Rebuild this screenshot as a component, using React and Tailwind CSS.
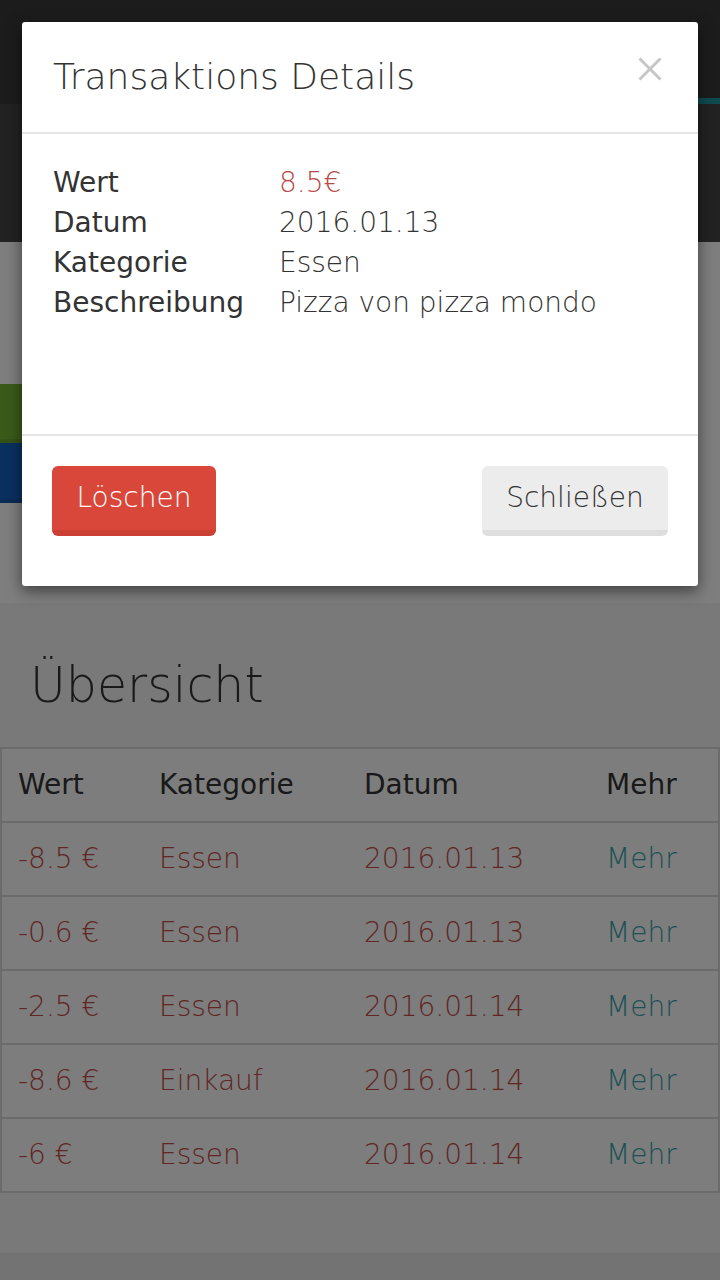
import React from "react";

const rows = [
  { wert: "-8.5 €", kategorie: "Essen", datum: "2016.01.13" },
  { wert: "-0.6 €", kategorie: "Essen", datum: "2016.01.13" },
  { wert: "-2.5 €", kategorie: "Essen", datum: "2016.01.14" },
  { wert: "-8.6 €", kategorie: "Einkauf", datum: "2016.01.14" },
  { wert: "-6 €", kategorie: "Essen", datum: "2016.01.14" },
];

const details = [
  { label: "Wert", value: "8.5€", red: true },
  { label: "Datum", value: "2016.01.13" },
  { label: "Kategorie", value: "Essen" },
  { label: "Beschreibung", value: "Pizza von pizza mondo" },
];

function Page() {
  return (
    <div className="flex flex-col">
      {/* Navbar */}
      <div className="h-[98px] bg-[#383838]" />
      <div className="flex h-[6px] bg-[#383838]">
        <div className="flex-1" />
        <div className="w-[22px] bg-[#1e949e]" />
      </div>
      <div className="h-[138px] bg-[#444444]" />

      {/* Top section */}
      <div className="flex flex-col bg-[#fcfcfc]">
        <div className="h-[142px]" />
        <div className="h-[59px] w-[40px] border-b-4 border-[#68a22c] bg-[#74b434]" />
        <div className="h-[60px] w-[40px] border-b-4 border-[#1256ad] bg-[#1460c0]" />
        <div className="h-[100px]" />
      </div>

      {/* Übersicht */}
      <div className="bg-[#f2f2f2] pb-[60px]">
        <h1 className="px-[30px] pt-[53px] pb-[31px] text-[49px] leading-[60px] font-extralight text-[#333]">
          Übersicht
        </h1>
        <table className="w-full table-fixed border-collapse border-2 border-[#d6d6d6] bg-[#fafafa] text-[28px]">
          <thead>
            <tr className="h-[74px] border-2 border-[#d6d6d6] text-left text-[#333]">
              <th className="w-[158px] pl-[16px] font-normal">Wert</th>
              <th className="w-[205px] font-normal">Kategorie</th>
              <th className="w-[242px] font-normal">Datum</th>
              <th className="font-normal">Mehr</th>
            </tr>
          </thead>
          <tbody className="font-extralight">
            {rows.map((r, i) => (
              <tr key={i} className="h-[74px] border-2 border-[#d6d6d6]">
                <td className="pl-[16px] text-[#bf4d49]">{r.wert}</td>
                <td className="text-[#bf4d49]">{r.kategorie}</td>
                <td className="text-[#bf4d49]">{r.datum}</td>
                <td className="text-[#36a2a8]">Mehr</td>
              </tr>
            ))}
          </tbody>
        </table>
      </div>
      <div className="h-[27px] bg-[#e6e6e6]" />
    </div>
  );
}

export default function App() {
  return (
    <div
      className="relative h-[1280px] w-[720px] overflow-hidden"
      style={{ fontFamily: '"DejaVu Sans", sans-serif' }}
    >
      <Page />
      {/* Backdrop */}
      <div className="absolute inset-0 bg-black/50" />

      {/* Modal */}
      <div className="absolute top-[22px] left-[22px] w-[676px] rounded-[3px] bg-white shadow-[0_5px_15px_rgba(0,0,0,0.5)]">
        <div className="flex h-[112px] items-start justify-between border-b-2 border-[#e5e5e5] pr-[36px] pl-[31px]">
          <h2 className="pt-[32px] text-[36px] leading-[46px] font-extralight text-[#333]">
            Transaktions Details
          </h2>
          <button className="mt-[35px] text-[#c6c6c6]">
            <svg width="24" height="24" viewBox="0 0 24 24">
              <path d="M1.5 1.5 L22.5 22.5 M22.5 1.5 L1.5 22.5" stroke="currentColor" strokeWidth="3" />
            </svg>
          </button>
        </div>

        <div className="h-[302px] border-b-2 border-[#e5e5e5] pt-[29px] pl-[31px] text-[28px] leading-[40px]">
          {details.map((d) => (
            <div key={d.label} className="flex">
              <div className="w-[226px] text-[#333]">{d.label}</div>
              <div className={d.red ? "font-extralight text-[#b94a48]" : "font-extralight text-[#333]"}>
                {d.value}
              </div>
            </div>
          ))}
        </div>

        <div className="flex justify-between pt-[30px] pr-[30px] pb-[50px] pl-[30px]">
          <button className="h-[70px] w-[164px] rounded-[6px] border-b-[6px] border-[#cc3f33] bg-[#d9473a] text-[28px] font-extralight text-white">
            Löschen
          </button>
          <button className="h-[70px] w-[186px] rounded-[6px] border-b-[6px] border-[#dedede] bg-[#ececec] text-[28px] font-extralight text-[#333]">
            Schließen
          </button>
        </div>
      </div>
    </div>
  );
}
